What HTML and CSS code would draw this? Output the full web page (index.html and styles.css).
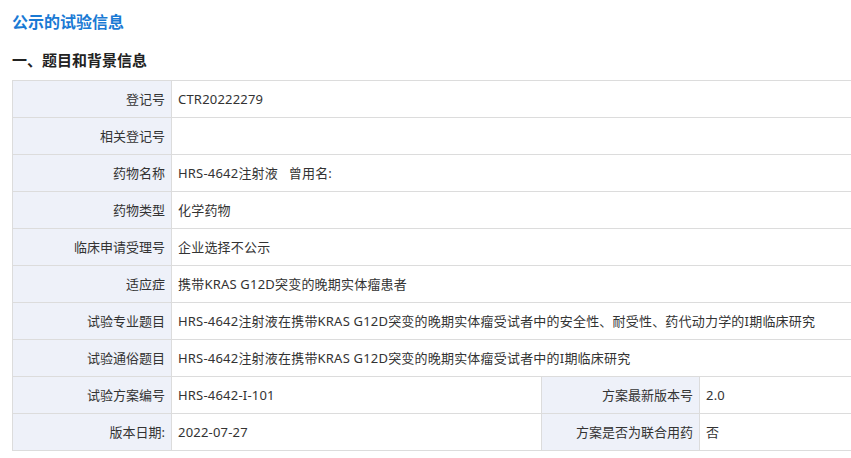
FILE: index.html
```html
<!DOCTYPE html>
<html lang="zh">
<head>
<meta charset="utf-8">
<link rel="stylesheet" href="styles.css">
</head>
<body>
<h1 class="title">公示的试验信息</h1>
<h2 class="section">一、题目和背景信息</h2>
<table class="info">
  <colgroup>
    <col class="c-label">
    <col class="c-value">
    <col class="c-label2">
    <col class="c-value2">
  </colgroup>
  <tr><th>登记号</th><td colspan="3">CTR20222279</td></tr>
  <tr><th>相关登记号</th><td colspan="3"></td></tr>
  <tr><th>药物名称</th><td colspan="3">HRS-4642注射液&nbsp;&nbsp;&nbsp;曾用名:</td></tr>
  <tr><th>药物类型</th><td colspan="3">化学药物</td></tr>
  <tr><th>临床申请受理号</th><td colspan="3">企业选择不公示</td></tr>
  <tr><th>适应症</th><td colspan="3">携带KRAS G12D突变的晚期实体瘤患者</td></tr>
  <tr><th>试验专业题目</th><td colspan="3">HRS-4642注射液在携带KRAS G12D突变的晚期实体瘤受试者中的安全性、耐受性、药代动力学的I期临床研究</td></tr>
  <tr><th>试验通俗题目</th><td colspan="3">HRS-4642注射液在携带KRAS G12D突变的晚期实体瘤受试者中的I期临床研究</td></tr>
  <tr><th>试验方案编号</th><td>HRS-4642-I-101</td><th>方案最新版本号</th><td>2.0</td></tr>
  <tr><th>版本日期:</th><td>2022-07-27</td><th>方案是否为联合用药</th><td>否</td></tr>
</table>
</body>
</html>
```
FILE: styles.css
```css
html, body {
  margin: 0;
  padding: 0;
  overflow: hidden;
  background: #fff;
}
body {
  padding: 0 12px;
  font-family: "Noto Sans", "Noto Sans CJK SC", sans-serif;
  color: #333;
  font-size: 13px;
}
.title {
  margin: 10px 0 0;
  font-size: 16px;
  line-height: 24px;
  font-weight: bold;
  color: #1a7ad4;
}
.section {
  margin: 14px 0 8px;
  font-size: 15px;
  line-height: 24px;
  font-weight: bold;
  color: #222;
}
.info {
  border-collapse: collapse;
  table-layout: fixed;
  width: 860px;
}
.c-label { width: 159px; }
.c-value { width: 370px; }
.c-label2 { width: 158px; }
.info th, .info td {
  border: 1px solid #dcdcdc;
  height: 37px;
  padding: 0 6px;
  font-size: 13px;
  font-weight: normal;
  line-height: 18px;
  box-sizing: border-box;
  white-space: nowrap;
}
.info th {
  background: #eef1f9;
  text-align: right;
  color: #333;
}
.info td {
  text-align: left;
  color: #333;
  letter-spacing: 0.2px;
}
```
